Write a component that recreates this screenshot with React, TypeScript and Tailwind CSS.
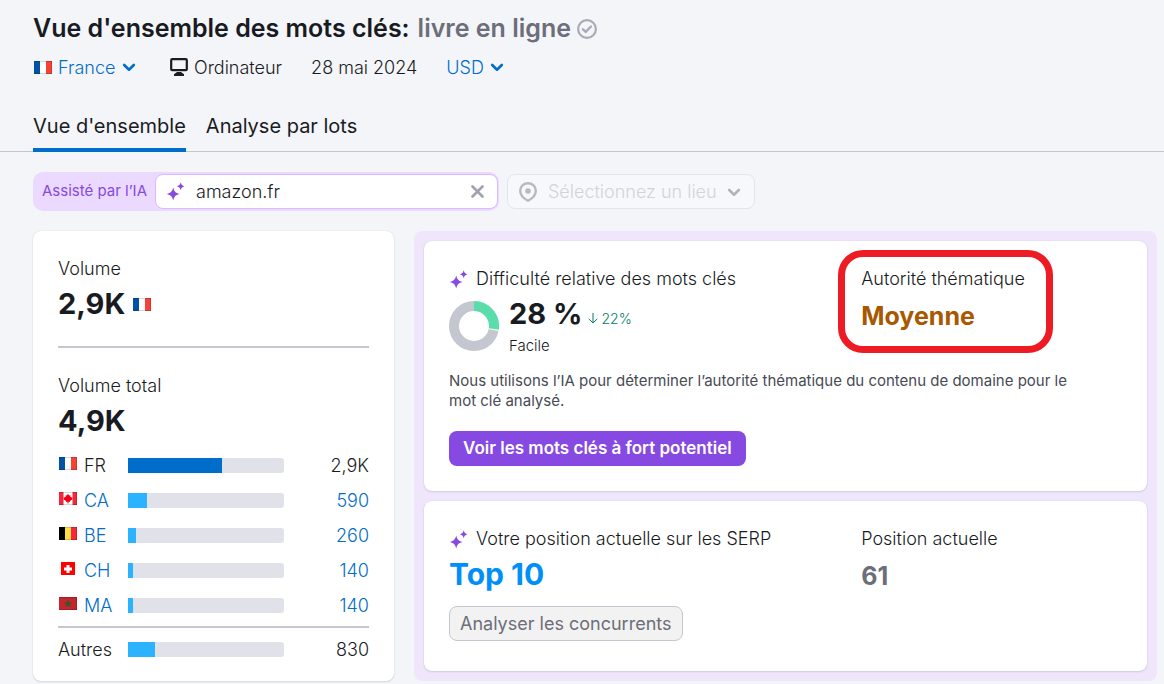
import type { ReactNode } from "react";

type Country = {
  code: string;
  volume: string;
  share: number;
  current?: boolean;
};

const countries: Country[] = [
  { code: "FR", volume: "2,9K", share: 60, current: true },
  { code: "CA", volume: "590", share: 12 },
  { code: "BE", volume: "260", share: 5 },
  { code: "CH", volume: "140", share: 3 },
  { code: "MA", volume: "140", share: 3 },
];

function Flag({ code }: { code: string }) {
  return (
    <svg width="18" height="13" viewBox="0 0 18 13" className="shrink-0" aria-hidden="true">
      {code === "FR" && (
        <>
          <path d="M0 0h6v13H0z" fill="#0052a5" />
          <path d="M6 0h6v13H6z" fill="#fff" />
          <path d="M12 0h6v13h-6z" fill="#f44336" />
        </>
      )}
      {code === "CA" && (
        <>
          <path d="M0 0h18v13H0z" fill="#fff" />
          <path d="M0 0h4.500v13H0zM13.500 0H18v13h-4.500z" fill="#f8253c" />
          <path
            d="M9 2l1.300 1.600 1-.3v1.800l.9-.4.3.9 1 .1-.6 1.200.3.600-2.300 1.600.1.900-1.500-.3V11.500h-1V9.700l-1.500.3.1-.9-2.300-1.600.3-.6-.6-1.200 1-.1.3-.9.900.4V3.300l1 .3z"
            fill="#f00014"
          />
        </>
      )}
      {code === "BE" && (
        <>
          <path d="M0 0h6v13H0z" fill="#000" />
          <path d="M6 0h6v13H6z" fill="#fddf40" />
          <path d="M12 0h6v13h-6z" fill="#f8253c" />
        </>
      )}
      {code === "CH" && (
        <>
          <path d="M2 0h14v13H2z" fill="#f00" />
          <path d="M7.500 3h3v2.500H13v3h-2.500V11h-3V8.500H5v-3h2.500z" fill="#fff" />
        </>
      )}
      {code === "MA" && (
        <>
          <path d="M0 0h18v13H0z" fill="#c1272d" />
          <path
            d="M9 3.500l2 6-5.200-3.700h6.400L7 9.500z"
            fill="#34572f"
            stroke="#34572f"
            strokeWidth=".8"
          />
        </>
      )}
      {code !== "CH" && (
        <path d="M0 .5h18M0 12.500h18M17.500 0v13" stroke="#000" strokeOpacity=".16" fill="none" />
      )}
    </svg>
  );
}

function Sparkles() {
  return (
    <svg width="19" height="19" viewBox="0 0 19 19" fill="#8649e1" className="shrink-0" aria-hidden="true">
      <path d="M7.200 5.500c1.300 4.400 1.900 5.100 6.300 6.500-4.400 1.400-5 2.100-6.300 6.500C5.900 14.100 5.200 13.400.8 12c4.400-1.400 5.100-2.100 6.400-6.500z" />
      <path d="M14.700.3c.9 2.700 1.300 3.100 4 4-2.700.9-3.100 1.300-4 4-.9-2.700-1.300-3.100-4-4 2.700-.9 3.100-1.300 4-4z" />
    </svg>
  );
}

function Chevron({ className }: { className: string }) {
  return (
    <svg width="14" height="9" viewBox="0 0 14 9" fill="none" aria-hidden="true" className={className}>
      <path
        d="M2.200 2l4.800 4.700L11.800 2"
        stroke="currentColor"
        strokeWidth="2.600"
        strokeLinecap="round"
        strokeLinejoin="round"
      />
    </svg>
  );
}

function LinkSelect({ label, value }: { label: string; value: string }) {
  return (
    <span className="relative flex items-center text-[#006dca]">
      <select aria-label={label} className="cursor-pointer appearance-none bg-transparent pr-5 outline-none">
        <option>{value}</option>
      </select>
      <Chevron className="pointer-events-none absolute right-0" />
    </span>
  );
}

function Bar({ share, dark }: { share: number; dark?: boolean }) {
  return (
    <div className="h-[15px] w-[156px] overflow-hidden rounded-r-[3px] bg-[#e0e1e9]">
      <div
        className={dark ? "h-full bg-[#006dca]" : "h-full bg-[#2bb3ff]"}
        style={{ width: `${share}%` }}
      />
    </div>
  );
}

function Card({ children, className = "" }: { children: ReactNode; className?: string }) {
  return (
    <section className={`rounded-lg bg-white px-[25px] shadow-[0_0_1px_rgba(25,27,35,0.16),0_1px_2px_rgba(25,27,35,0.12)] ${className}`}>
      {children}
    </section>
  );
}

function Header() {
  return (
    <header className="border-b border-[#c4c7cf] px-[33px] pt-3">
      <h1 className="flex items-center text-[25px] leading-8 font-semibold">
        Vue d'ensemble des mots clés:
        <span className="ml-2 text-[#6c6e79]">livre en ligne</span>
        <svg width="20" height="20" viewBox="0 0 20 20" fill="none" stroke="#a9abb6" className="mt-px ml-[6px]" aria-hidden="true">
          <circle cx="10" cy="10" r="8.900" strokeWidth="2.200" />
          <path d="M6 10.300l2.700 2.600L14 7.500" strokeWidth="2.400" strokeLinecap="round" strokeLinejoin="round" />
        </svg>
      </h1>
      <div className="mt-[11px] flex h-6 items-center pl-px text-[18px] font-light">
        <span className="mr-[6px]">
          <Flag code="FR" />
        </span>
        <LinkSelect label="Pays" value="France" />
        <svg width="18" height="18" viewBox="0 0 18 18" className="mr-[6px] ml-[34px]" aria-hidden="true">
          <rect x="1.200" y="1.200" width="15.600" height="11" rx="1" fill="none" stroke="#191b23" strokeWidth="2.200" />
          <path d="M7 14h4l3 2.200V18H4v-1.800z" fill="#191b23" />
        </svg>
        <span>Ordinateur</span>
        <span className="mx-[29px]">28 mai 2024</span>
        <LinkSelect label="Devise" value="USD" />
      </div>
      <nav className="-mb-px mt-[33px] flex gap-[20px] text-[20px] leading-7">
        <a href="#ensemble" className="border-b-4 border-[#006dca] pb-2">
          Vue d'ensemble
        </a>
        <a href="#lots">Analyse par lots</a>
      </nav>
    </header>
  );
}

function Filters() {
  return (
    <div className="flex items-center gap-2">
      <div className="flex w-[466px] items-center rounded-[10px] bg-[#ecd9ff] py-[2px] pr-px pl-[2px]">
        <label htmlFor="domain" className="flex-1 pl-[7px] text-[15px] text-[#8649e1]">
          Assisté par l’IA
        </label>
        <div className="flex h-[35px] w-[343px] items-center rounded-lg border border-[#dcb8ff] bg-white pr-[13px] pl-[10px]">
          <Sparkles />
          <input
            id="domain"
            defaultValue="amazon.fr"
            className="ml-[11px] min-w-0 flex-1 bg-transparent text-[18px] font-light outline-none"
          />
          <button type="button" aria-label="Effacer">
            <svg width="13" height="13" viewBox="0 0 13 13" fill="none" aria-hidden="true">
              <path d="M1.500 1.500l10 10M11.500 1.500l-10 10" stroke="#a0a2ad" strokeWidth="2.600" strokeLinecap="round" />
            </svg>
          </button>
        </div>
      </div>
      <div className="relative flex items-center">
        <svg width="18" height="20" viewBox="0 0 18 20" className="absolute left-3" aria-hidden="true">
          <path
            d="M9 1.200c4.500 0 7.800 3.200 7.800 7.500 0 4.200-3 7.500-7.800 10.100C4.200 16.200 1.200 12.900 1.200 8.700c0-4.300 3.300-7.500 7.800-7.500z"
            fill="none"
            stroke="#b9bac1"
            strokeWidth="2.400"
          />
          <circle cx="9" cy="9" r="2.800" fill="#b9bac1" />
        </svg>
        <select
          aria-label="Lieu"
          disabled
          className="h-[35px] w-[248px] appearance-none rounded-lg border border-[#e4e5ea] bg-[#f7f8fc] pl-10 text-[18px] font-light text-[#d1d3da] opacity-100"
        >
          <option>Sélectionnez un lieu</option>
        </select>
        <Chevron className="pointer-events-none absolute right-[14px] bottom-3 text-[#b2b4bb]" />
      </div>
    </div>
  );
}

function VolumeCard() {
  return (
    <Card className="w-[361px] shrink-0 pt-[26px] pb-[11px]">
      <h2 className="text-[18px] leading-6 font-light">Volume</h2>
      <p className="mt-[5px] flex items-center gap-2 text-[29px] leading-9 font-bold">
        2,9K <Flag code="FR" />
      </p>
      <hr className="mt-6 border-t-2 border-[#c4c7cf]" />
      <h2 className="mt-[26px] text-[18px] leading-6 font-light">Volume total</h2>
      <p className="mt-[5px] text-[29px] leading-9 font-bold">4,9K</p>
      <table className="mt-[9px] w-full text-[18px] font-light">
        <tbody>
          {countries.map((country) => (
            <tr key={country.code} className="h-[35px]">
              <th scope="row" className="w-[70px] p-0 text-left font-light">
                <span className="flex items-center gap-[7px] pl-px">
                  <span className="mb-1">
                    <Flag code={country.code} />
                  </span>
                  {country.current ? (
                    country.code
                  ) : (
                    <a href={`#${country.code}`} className="text-[#006dca]">
                      {country.code}
                    </a>
                  )}
                </span>
              </th>
              <td className="p-0">
                <Bar share={country.share} dark={country.current} />
              </td>
              <td className="p-0 text-right">
                {country.current ? (
                  country.volume
                ) : (
                  <a href={`#${country.code}`} className="text-[#006dca]">
                    {country.volume}
                  </a>
                )}
              </td>
            </tr>
          ))}
          <tr className="h-1" aria-hidden="true" />
        </tbody>
        <tfoot>
          <tr className="h-[43px] border-t-2 border-[#c4c7cf]">
            <th scope="row" className="p-0 text-left font-light">
              Autres
            </th>
            <td className="p-0">
              <Bar share={17} />
            </td>
            <td className="p-0 text-right">830</td>
          </tr>
        </tfoot>
      </table>
    </Card>
  );
}

function DifficultyCard() {
  return (
    <Card className="pt-[26px] pb-[25px]">
      <div className="grid grid-cols-[49fr_31fr]">
        <div>
          <h2 className="flex items-center gap-2 text-[18px] leading-6 font-light">
            <Sparkles />
            Difficulté relative des mots clés
          </h2>
          <div className="mt-[5px] flex gap-[10px]">
            <svg width="50" height="50" viewBox="0 0 50 50" fill="none" strokeWidth="10" className="mt-[5px]" aria-hidden="true">
              <circle cx="25" cy="25" r="20" stroke="#c4c7cf" />
              <path d="M25 5a20 20 0 0 1 19.600 24" stroke="#fff" />
              <path d="M25 5a20 20 0 0 1 19.800 22.900" stroke="#59ddaa" />
            </svg>
            <div>
              <p className="flex items-baseline gap-[6px] text-[29px] leading-9 font-bold">
                28 %
                <span className="flex items-baseline gap-[3px] text-[14px] leading-none font-light text-[#007c65]">
                  <svg width="10" height="11" viewBox="0 0 10 11" fill="none" stroke="currentColor" aria-hidden="true">
                    <path d="M5 0v10M.7 5.800L5 10l4.300-4.200" />
                  </svg>
                  22%
                </span>
              </p>
              <p className="mt-1 text-[15px] leading-5 font-light">Facile</p>
            </div>
          </div>
        </div>
        <div className="relative self-start">
          <h2 className="text-[18px] leading-6 font-light">Autorité thématique</h2>
          <p className="mt-[9px] text-[25px] leading-8 font-bold text-[#a75800]">Moyenne</p>
          <div className="pointer-events-none absolute -top-[17px] -left-[23px] h-[103px] w-[215px] rounded-[25px] border-[7px] border-[#ed1c24]" />
        </div>
      </div>
      <p className="mt-[15px] max-w-[640px] text-[15px] leading-5 text-[#484a54]">
        Nous utilisons l’IA pour déterminer l’autorité thématique du contenu de domaine pour le mot clé analysé.
      </p>
      <button type="button" className="mt-5 h-[35px] rounded-lg bg-[#8649e1] px-[14px] text-[17px] font-semibold text-white">
        Voir les mots clés à fort potentiel
      </button>
    </Card>
  );
}

function PositionCard() {
  return (
    <Card className="mt-[10px] grid grid-cols-[49fr_31fr] pt-[26px] pb-[30px]">
      <div>
        <h2 className="flex items-center gap-2 text-[18px] leading-6 font-light">
          <Sparkles />
          Votre position actuelle sur les SERP
        </h2>
        <p className="mt-[5px] text-[30px] leading-9 font-bold text-[#008ff8]">Top 10</p>
        <button
          type="button"
          className="mt-[14px] h-[35px] rounded-lg border border-[#c4c7cf] bg-[#f2f2f2] px-[10px] text-[18px] text-[#6c6e79]"
        >
          Analyser les concurrents
        </button>
      </div>
      <div>
        <h2 className="text-[18px] leading-6 font-light">Position actuelle</h2>
        <p className="mt-[9px] text-[25px] leading-8 font-bold text-[#6c6e79]">61</p>
      </div>
    </Card>
  );
}

export default function App() {
  return (
    <div className="min-h-screen bg-[#f4f5f9] font-['Inter',sans-serif] text-[#191b23]">
      <Header />
      <main className="pt-5 pr-[7px] pb-[2px] pl-[33px]">
        <Filters />
        <div className="mt-5 flex items-start gap-5">
          <VolumeCard />
          <div className="min-w-0 flex-1 rounded-lg bg-[#efe6fc] p-[10px]">
            <DifficultyCard />
            <PositionCard />
          </div>
        </div>
      </main>
    </div>
  );
}
